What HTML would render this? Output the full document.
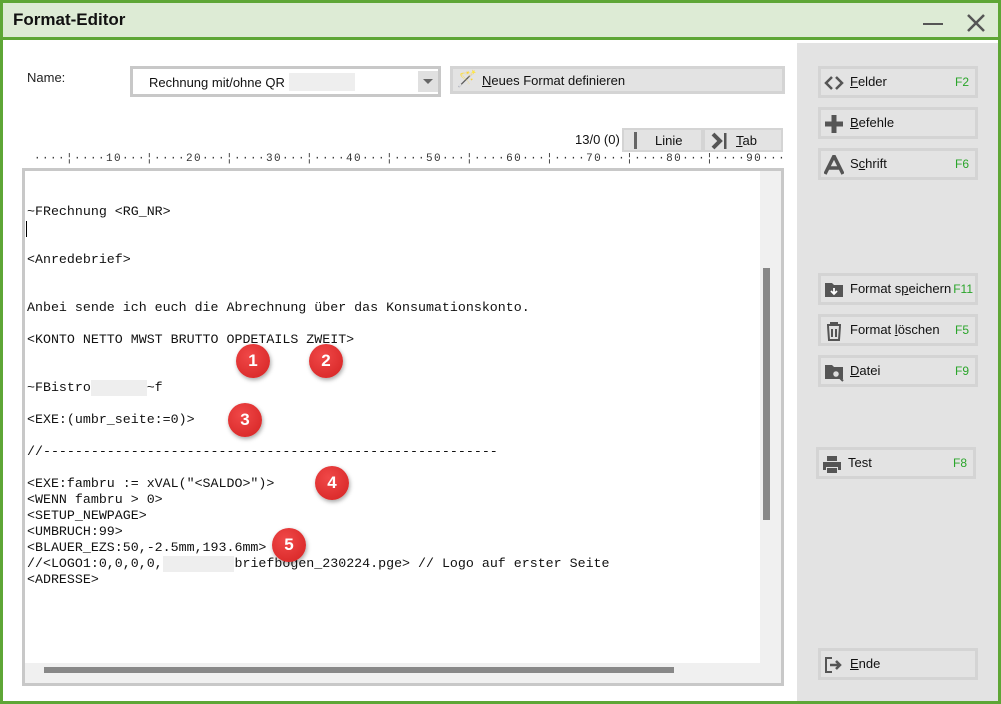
<!DOCTYPE html>
<html><head><meta charset="utf-8"><style>
*{margin:0;padding:0;box-sizing:border-box}
body{width:1001px;height:704px;overflow:hidden;background:#5ea636;position:relative;font-family:"Liberation Sans",sans-serif}
.win{position:absolute;left:3px;top:3px;width:995px;height:698px;background:#fff}
.title{position:absolute;left:0;top:0;width:995px;height:37px;background:#ddebd5;border-bottom:3px solid #5ea636}
.title span{position:absolute;left:10px;top:7px;font-size:17px;font-weight:bold;color:#111}
.side{position:absolute;left:794px;top:40px;width:201px;height:658px;background:#e3e3e3}
.btn{position:absolute;background:#e3e3e3;border:3px solid #d4d4d4;font-size:13px;color:#111}
.btn .l{position:absolute;left:29px;top:5px}
.btn .k{position:absolute;right:6px;top:6px;color:#2aa52a;font-size:12px}
.ic{position:absolute;left:3px;top:4px;width:20px;height:20px}
.mono{font-family:"Liberation Mono",monospace;font-size:13.3px;color:#111;white-space:pre;position:absolute;left:24px;line-height:16px}
.b{position:absolute;width:34px;height:34px;border-radius:50%;background:radial-gradient(circle at 40% 35%,#f04848,#d42222);box-shadow:1px 2px 4px rgba(0,0,0,.35);color:#fff;font-weight:bold;font-size:17px;text-align:center;line-height:34px}
.blur{display:inline-block;background:#eee;color:transparent}
u{text-decoration:underline}
</style></head><body>
<div class="win">
<div class="title"><span>Format-Editor</span>
<div style="position:absolute;left:920px;top:20px;width:20px;height:2px;background:#555"></div>
<svg style="position:absolute;left:963px;top:10px" width="20" height="20"><path d="M2 2L18 18M18 2L2 18" stroke="#555" stroke-width="2.5"/></svg>
</div>
<div style="position:absolute;left:24px;top:67px;font-size:13px;color:#222">Name:</div>
<div style="position:absolute;left:127px;top:63px;width:311px;height:31px;border:3px solid #c8c8c8;background:#fff">
<span style="position:absolute;left:16px;top:6px;font-size:13px;color:#111">Rechnung mit/ohne QR</span>
<span style="position:absolute;left:156px;top:4px;width:66px;height:18px;background:#eee"></span>
<div style="position:absolute;right:0;top:2px;width:20px;height:21px;background:#e0e0e0"><div style="margin:8px auto 0;width:0;border-left:5px solid transparent;border-right:5px solid transparent;border-top:5px solid #666"></div></div></div>
<div class="btn" style="left:447px;top:63px;width:335px;height:28px"><span style="position:absolute;left:4px;top:0px;font-size:16px">🪄</span><span class="l" style="left:29px;top:4px"><u>N</u>eues Format definieren</span></div>
<div style="position:absolute;left:572px;top:129px;font-size:13px;color:#111">13/0 (0)</div>
<div class="btn" style="left:619px;top:125px;width:81px;height:24px;border-width:2px"><div style="position:absolute;left:10px;top:2px;width:3px;height:17px;background:#666"></div><span style="position:absolute;left:31px;top:3px">Linie</span></div>
<div class="btn" style="left:700px;top:125px;width:80px;height:24px;border-width:2px"><svg style="position:absolute;left:6px;top:2px" width="20" height="18"><path d="M2 2L9 9L2 16" stroke="#555" stroke-width="4" fill="none"/><rect x="13" y="1" width="2.5" height="16" fill="#555"/></svg><span style="position:absolute;left:31px;top:3px"><u>T</u>ab</span></div>
<div style="position:absolute;left:31px;top:150px;font-family:'Liberation Mono',monospace;font-size:11px;color:#333;white-space:pre;letter-spacing:1.4px">····¦····10···¦····20···¦····30···¦····40···¦····50···¦····60···¦····70···¦····80···¦····90···</div>
<div style="position:absolute;left:19px;top:165px;width:762px;height:518px;border:3px solid #c8c8c8;background:#f0f0f0">
<div style="position:absolute;left:0;top:0;width:735px;height:492px;background:#fff"></div>
<div style="position:absolute;left:738px;top:97px;width:7px;height:252px;background:#888"></div>
<div style="position:absolute;left:19px;top:496px;width:630px;height:6px;background:#888"></div>
</div>
<div class="mono" style="top:201px">~FRechnung &lt;RG_NR&gt;</div>
<div style="position:absolute;left:23px;top:218px;width:1px;height:16px;background:#000"></div>
<div class="mono" style="top:249px">&lt;Anredebrief&gt;</div>
<div class="mono" style="top:297px">Anbei sende ich euch die Abrechnung über das Konsumationskonto.</div>
<div class="mono" style="top:329px">&lt;KONTO NETTO MWST BRUTTO OPDETAILS ZWEIT&gt;</div>
<div class="mono" style="top:377px">~FBistro<span class="blur">xxxxxxx</span>~f</div>
<div class="mono" style="top:409px">&lt;EXE:(umbr_seite:=0)&gt;</div>
<div class="mono" style="top:441px">//---------------------------------------------------------</div>
<div class="mono" style="top:473px">&lt;EXE:fambru := xVAL("&lt;SALDO&gt;")&gt;
&lt;WENN fambru &gt; 0&gt;
&lt;SETUP_NEWPAGE&gt;
&lt;UMBRUCH:99&gt;
&lt;BLAUER_EZS:50,-2.5mm,193.6mm&gt;
//&lt;LOGO1:0,0,0,0,<span class="blur">xxxxxxxxx</span>briefbogen_230224.pge&gt; // Logo auf erster Seite
&lt;ADRESSE&gt;</div>
<div class="b" style="left:233px;top:341px">1</div>
<div class="b" style="left:306px;top:341px">2</div>
<div class="b" style="left:225px;top:400px">3</div>
<div class="b" style="left:312px;top:463px">4</div>
<div class="b" style="left:269px;top:525px">5</div>
<div class="side"></div>
<div class="btn" style="left:815px;top:63px;width:160px;height:32px"><svg class="ic" viewBox="0 0 20 20"><path d="M8 4L2 10L8 16M12 4L18 10L12 16" stroke="#555" stroke-width="2.5" fill="none"/></svg><span class="l"><u>F</u>elder</span><span class="k">F2</span></div>
<div class="btn" style="left:815px;top:104px;width:160px;height:32px"><svg class="ic" viewBox="0 0 20 20"><path d="M10 1V19M1 10H19" stroke="#555" stroke-width="5"/></svg><span class="l"><u>B</u>efehle</span></div>
<div class="btn" style="left:815px;top:145px;width:160px;height:32px"><svg class="ic" viewBox="0 0 20 20"><path d="M1 19L10 1L19 19M5 13H15" stroke="#555" stroke-width="3.5" fill="none"/></svg><span class="l">S<u>c</u>hrift</span><span class="k">F6</span></div>
<div class="btn" style="left:815px;top:270px;width:160px;height:32px"><svg class="ic" viewBox="0 0 20 20"><path d="M1 3H8L10 5H19V17H1Z" fill="#555"/><path d="M10 8V14M7 11L10 14L13 11" stroke="#fff" stroke-width="1.8" fill="none"/></svg><span class="l">Format s<u>p</u>eichern</span><span class="k" style="right:2px">F11</span></div>
<div class="btn" style="left:815px;top:311px;width:160px;height:32px"><svg class="ic" viewBox="0 0 20 20"><path d="M3 4H17M7 4V2H13V4M4 5L5 19H15L16 5M8 8V16M12 8V16" stroke="#555" stroke-width="2" fill="none"/></svg><span class="l">Format <u>l</u>öschen</span><span class="k">F5</span></div>
<div class="btn" style="left:815px;top:352px;width:160px;height:32px"><svg class="ic" viewBox="0 0 20 20"><path d="M1 3H8L10 5H19V17H1Z" fill="#555"/><circle cx="12" cy="12" r="3.5" fill="#ddd" stroke="#555" stroke-width="1.5"/><path d="M14.5 14.5L19 19" stroke="#555" stroke-width="2"/></svg><span class="l"><u>D</u>atei</span><span class="k">F9</span></div>
<div class="btn" style="left:813px;top:444px;width:160px;height:32px"><svg class="ic" viewBox="0 0 20 20"><path d="M5 2H15V7H5Z M1 8H19V16H16V13H4V16H1Z" fill="#555"/><path d="M5 14H15V19H5Z" fill="#555"/></svg><span class="l">Test</span><span class="k">F8</span></div>
<div class="btn" style="left:815px;top:645px;width:160px;height:32px"><svg class="ic" viewBox="0 0 20 20"><path d="M8 3H2V17H8" stroke="#555" stroke-width="2" fill="none"/><path d="M6 10H16M12 6L16 10L12 14" stroke="#555" stroke-width="2.5" fill="none"/></svg><span class="l"><u>E</u>nde</span></div>
</div>
</body></html>
